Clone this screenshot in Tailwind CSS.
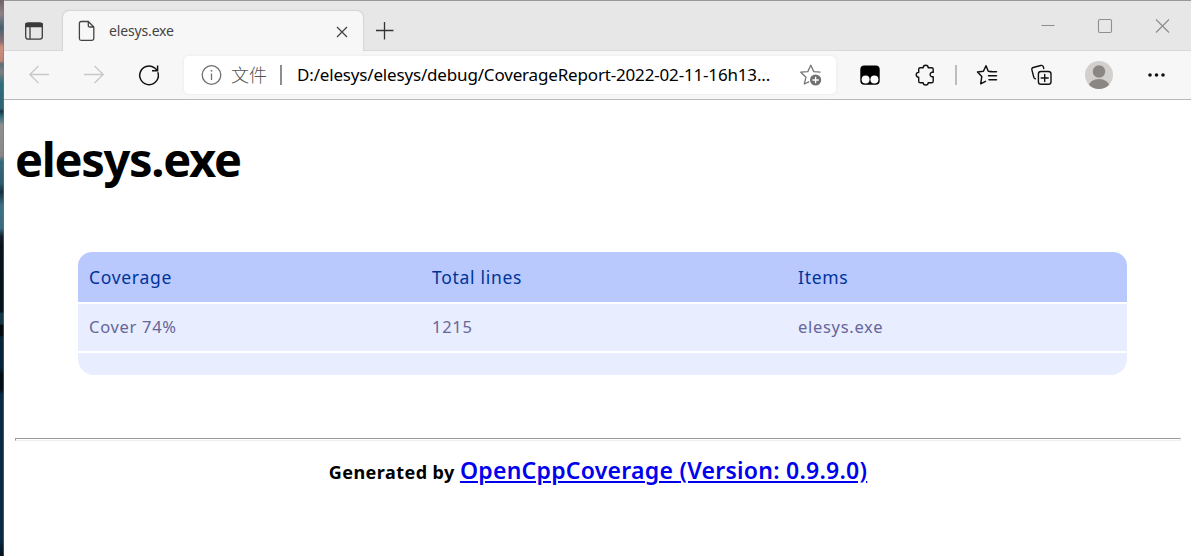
<!DOCTYPE html>
<html lang="zh">
<head>
<meta charset="utf-8">
<title>elesys.exe</title>
<script src="https://cdn.jsdelivr.net/npm/@tailwindcss/browser@4"></script>
</head>
<body class="flex w-[1191px] h-[556px] overflow-hidden bg-white font-['Noto_Sans','Noto_Sans_CJK_SC',sans-serif]">
<!-- desktop wallpaper edge -->
<svg class="w-1 h-[556px] shrink-0" viewBox="0 0 4 556" preserveAspectRatio="none">
  <defs><linearGradient id="w" x1="0" y1="0" x2="0" y2="1">
    <stop offset="0" stop-color="#6e6064"/><stop offset=".025" stop-color="#8d8288"/><stop offset=".05" stop-color="#46606c"/><stop offset=".075" stop-color="#8b6f74"/>
    <stop offset=".085" stop-color="#d08f7c"/><stop offset=".11" stop-color="#bb8578"/><stop offset=".115" stop-color="#5d7078"/><stop offset=".13" stop-color="#7c7f83"/><stop offset=".15" stop-color="#2f6d7c"/><stop offset=".195" stop-color="#2f6474"/>
    <stop offset=".2" stop-color="#1b3644"/><stop offset=".21" stop-color="#326d7c"/><stop offset=".225" stop-color="#8f8f92"/><stop offset=".28" stop-color="#8b8789"/><stop offset=".29" stop-color="#35697a"/><stop offset=".33" stop-color="#2f5d6e"/><stop offset=".345" stop-color="#143040"/><stop offset=".37" stop-color="#3d7084"/>
    <stop offset=".41" stop-color="#3b6b80"/><stop offset=".425" stop-color="#10202a"/><stop offset=".44" stop-color="#06131c"/><stop offset=".56" stop-color="#03121c"/><stop offset=".565" stop-color="#153a4a"/><stop offset=".583" stop-color="#14313f"/><stop offset=".585" stop-color="#02090f"/><stop offset=".603" stop-color="#02090f"/><stop offset=".606" stop-color="#062338"/><stop offset=".66" stop-color="#06233a"/><stop offset=".675" stop-color="#020c16"/><stop offset=".7" stop-color="#020c16"/><stop offset=".71" stop-color="#082a44"/><stop offset=".97" stop-color="#082a44"/><stop offset="1" stop-color="#03101c"/>
  </linearGradient></defs>
  <rect width="4" height="556" fill="url(#w)"/><rect x="3" width="1" height="556" fill="#777" opacity=".55"/>
</svg>
<div class="w-[1187px] flex flex-col">
  <!-- tab strip -->
  <div class="h-[51px] bg-[#e7e7e7] border-t border-t-[#999] flex shadow-[inset_0_-1px_0_#d9d9d9]">
    <div class="w-[59px] pl-[20px] pt-[20px] shrink-0">
      <svg class="w-5 h-5" viewBox="0 0 20 20" fill="none" stroke="#3b3b3b" stroke-width="1.3"><rect x="1.7" y="1.8" width="16.6" height="16.4" rx="2.4"/><path d="M2 2.7h16v3H2z" fill="#3b3b3b"/><path d="M6 5v13"/></svg>
    </div>
    <div class="relative w-[300px] h-10 mt-[10px] bg-[#f7f7f7] rounded-t-[6px] shadow-[0_0_2px_#aaa] [clip-path:inset(-4px_-4px_0_-4px)] flex items-center pl-[15px] shrink-0">
      <svg class="w-[18px] h-[22px]" viewBox="0 0 18 22" fill="none" stroke="#444" stroke-width="1.3" stroke-linejoin="round"><path d="M3.2 1.5H10.3L15.8 7V18.5Q15.8 20.3 14 20.3H3.2Q1.4 20.3 1.4 18.5V3.3Q1.4 1.5 3.2 1.5ZM10.3 1.5V5.5Q10.3 7 11.8 7H15.8"/></svg>
      <span class="ml-[13px] text-[14px] leading-5 text-[#444] tracking-[-0.15px] whitespace-nowrap">elesys.exe</span>
      <svg class="absolute left-[273px] top-[15px] w-[12px] h-[12px]" viewBox="0 0 12 12" fill="none" stroke="#444" stroke-width="1.3"><path d="M1 1l10 10M11 1L1 11"/></svg>
    </div>
    <svg class="ml-[12px] mt-[20px] w-[20px] h-[20px]" viewBox="0 0 20 20" fill="none" stroke="#333" stroke-width="1.3"><path d="M1 9.5h17.5M9.5 1v17.5"/></svg>
    <div class="ml-auto flex pt-[15px] gap-[37px] pr-[19px]">
      <svg class="w-5 h-5" viewBox="0 0 20 20" fill="none" stroke="#8c8c8c"><path d="M3.5 9.5h13"/></svg>
      <svg class="w-5 h-5" viewBox="0 0 20 20" fill="none" stroke="#8f8f8f" stroke-width="1.1"><rect x="3.5" y="3.5" width="13" height="13" rx="1.5"/></svg>
      <svg class="w-5 h-5" viewBox="0 0 20 20" fill="none" stroke="#8c8c8c" stroke-width="1.1"><path d="M4 3.5l13 13M17 3.5l-13 13"/></svg>
    </div>
  </div>
  <!-- toolbar -->
  <div class="h-[49px] bg-[#f7f7f7] border-b border-[#b9b9b9] flex items-center pl-[23px] [&>*]:shrink-0">
    <svg class="w-6 h-6" viewBox="0 0 24 24" fill="none" stroke="#c8c8c8" stroke-width="1.3"><path d="M22 11.5H2.5M11.5 3L2.8 11.5l8.7 8.5"/></svg>
    <svg class="w-6 h-6 ml-[31px]" viewBox="0 0 24 24" fill="none" stroke="#c8c8c8" stroke-width="1.3"><path d="M2 11.5h19.5M12.5 3l8.7 8.5-8.7 8.5"/></svg>
    <svg class="w-6 h-6 ml-[31px]" viewBox="0 0 24 24" fill="none" stroke="#111" stroke-width="1.5"><path d="M20.8 9.2A9.3 9.3 0 1 1 17.5 4.8L20.5 7.5M20.6 2.5V7.8H15"/></svg>
    <div class="ml-[23px] w-[652px] h-[38px] bg-white rounded-[5px] shadow-[0_0_3px_#e6e6e6] flex items-center pl-4">
      <svg class="w-[22px] h-[22px]" viewBox="0 0 22 22" fill="none" stroke="#707070" stroke-width="1.3"><circle cx="11.5" cy="11" r="9.3"/><path d="M11.5 9.5v6.5"/><path d="M11.5 6v1.6" stroke-width="1.5"/></svg>
      <span class="ml-[9px] w-[36px] text-[18px] leading-6 font-light text-[#555] whitespace-nowrap">文件</span>
      <span class="ml-[13px] w-[2px] h-5 bg-[#8d8d8d]"></span>
      <span class="ml-[15px] w-[476px] text-[17px] leading-6 tracking-[-0.17px] text-black whitespace-nowrap">D:/elesys/elesys/debug/CoverageReport-2022-02-11-16h13...</span>
      <svg class="ml-[26px] w-6 h-6 shrink-0" viewBox="0 0 24 24" fill="none" stroke="#777" stroke-width="1.3" stroke-linejoin="round"><path d="M21.5 9.2L14.8 8.6 11.8 2.2 8.8 8.6 1.8 9.2 7 14.2 5.3 21 10.2 18.6"/><circle cx="16.6" cy="17" r="5.6" fill="#707070" stroke="none"/><path d="M16.6 13.8v6.4M13.4 17h6.4" stroke="#fff"/></svg>
    </div>
    <svg class="ml-[22px] w-6 h-6" viewBox="0 0 24 24"><rect x="2.3" y="2.5" width="19.4" height="19.3" rx="4" fill="#000"/><circle cx="7.6" cy="16.4" r="4" fill="#fff"/><circle cx="16.4" cy="16.4" r="4" fill="#fff"/></svg>
    <svg class="ml-[32px] w-6 h-6" viewBox="0 0 24 24" fill="none" stroke="#111" stroke-width="1.4" stroke-linejoin="round"><path d="M6.3 4.7H9.2C9.2 1.5 14.2 1.5 14.2 4.7H17.6Q19.2 4.7 19.2 6.3V9.4C15.1 8.2 15.1 14.8 19.2 13.6V18.2Q19.2 19.8 17.6 19.8H14.2C14.2 22.8 9.2 22.8 9.2 19.8H6.3Q4.7 19.8 4.7 18.2V14.2C1.4 14.2 1.4 9.4 4.7 9.4V6.3Q4.7 4.7 6.3 4.7Z"/></svg>
    <span class="ml-[17px] w-[2px] h-5 bg-[#bdbdbd]"></span>
    <svg class="ml-[18px] w-6 h-6" viewBox="0 0 24 24" fill="none" stroke="#111" stroke-width="1.5" stroke-linejoin="round" stroke-linecap="round"><path d="M16.7 8.6L13.3 8.2 11 2.7 8.4 8.2 2.5 9 6.8 13.5 5.7 20.8 10.5 18.3M14.5 8.7H21.5M13.5 12.8h8M14 16.8h7.5"/></svg>
    <svg class="ml-[31px] w-6 h-6" viewBox="0 0 24 24" fill="none" stroke="#111" stroke-width="1.4" stroke-linecap="round"><path d="M5.3 15.8Q4.2 15.5 3.8 14.2L1.9 6.9Q1.5 5 3.2 4.5L10.7 2.5Q12.7 2 13.3 3.8L13.8 5.5"/><rect x="8.4" y="8.5" width="12.6" height="12.8" rx="2.6"/><path d="M14.7 11.5v7M11.2 15h7"/></svg>
    <svg class="ml-[31px] w-7 h-7" viewBox="0 0 28 28"><defs><clipPath id="a"><circle cx="14" cy="14" r="14"/></clipPath></defs><g clip-path="url(#a)"><rect width="28" height="28" fill="#d2d0ce"/><circle cx="14" cy="10.5" r="6.2" fill="#8a8683"/><ellipse cx="14" cy="26" rx="10.5" ry="8" fill="#8a8683"/></g></svg>
    <svg class="ml-[32px] w-6 h-6" viewBox="0 0 24 24" fill="#111"><circle cx="5" cy="12" r="1.8"/><circle cx="11.5" cy="12" r="1.8"/><circle cx="18" cy="12" r="1.8"/></svg>
  </div>
  <!-- page -->
  <main class="flex-1 pl-[11px] pr-[10px]">
    <h1 class="mt-[27px] text-[47px] leading-[64px] font-bold text-black tracking-[-1.3px]">elesys.exe</h1>
    <table class="ml-[63px] mt-[61px] w-[1049px] table-fixed border-separate border-spacing-0 text-left text-[17.5px] tracking-[0.7px]">
      <colgroup><col class="w-[343px]"><col class="w-[366px]"><col class="w-[340px]"></colgroup>
      <thead><tr class="h-[50px] text-[#003399] leading-6">
        <th class="bg-[#b9c9fe] rounded-tl-[14px] font-normal pl-[11px] py-0">Coverage</th><th class="bg-[#b9c9fe] font-normal pl-[11px] py-0">Total lines</th><th class="bg-[#b9c9fe] rounded-tr-[14px] font-normal pl-[11px] py-0">Items</th></tr></thead>
      <tbody>
        <tr class="h-[51px] text-[#666699] text-[16.5px] leading-6"><td class="bg-[#e8edff] border-y-2 border-white pl-[11px] pt-0 pb-[2px]">Cover 74%</td><td class="bg-[#e8edff] border-y-2 border-white pl-[11px] pt-0 pb-[2px]">1215</td><td class="bg-[#e8edff] border-y-2 border-white pl-[11px] pt-0 pb-[2px]">elesys.exe</td></tr>
        <tr class="h-[22px]"><td class="bg-[#e8edff] rounded-bl-[16px] p-0"></td><td class="bg-[#e8edff] p-0"></td><td class="bg-[#e8edff] rounded-br-[16px] p-0"></td></tr>
      </tbody>
    </table>
    <hr class="mt-[63px] h-[3px] border border-t-[#999] border-l-[#999] border-b-[#eee] border-r-[#eee]">
    <p class="mt-[11px] text-center text-[18px] leading-9 font-bold text-black tracking-[0.45px] whitespace-nowrap">Generated by <a href="#" class="text-[23px] font-semibold text-[#0000ee] tracking-[0.26px] underline underline-offset-[2px] decoration-2">OpenCppCoverage (Version: 0.9.9.0)</a></p>
  </main>
</div>
</body>
</html>
